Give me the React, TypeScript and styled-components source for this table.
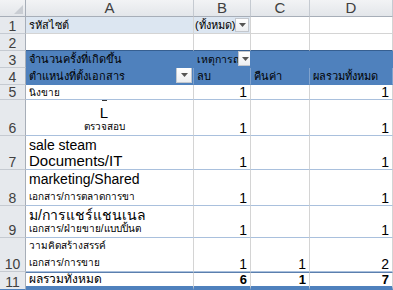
import React from 'react';
import styled, { createGlobalStyle } from 'styled-components';

const GlobalStyle = createGlobalStyle`
  html, body {
    margin: 0;
    padding: 0;
    background: #ffffff;
  }
  body {
    font-family: "Liberation Sans", Arial, "Noto Sans", sans-serif;
  }
`;

const ROW_HEIGHTS = [17, 17, 17, 17, 17, 15, 36, 34, 36, 32, 34, 18];

const GRID = '#d4d4d4';
const BAND = '#a9c0dd';
const BLUE = '#4f81bd';

const Sheet = styled.div`
  display: grid;
  grid-template-columns: 26px 168px 57px 59px 83px;
  grid-template-rows: ${ROW_HEIGHTS.map((h) => `${h}px`).join(' ')};
  width: 393px;
  height: 290px;
  overflow: hidden;
`;

const HeadBase = styled.div`
  box-sizing: border-box;
  display: flex;
  justify-content: center;
  font-size: 15px;
  color: #404040;
  background: linear-gradient(#f2f3f5, #e3e6ea);
  overflow: hidden;
`;

const Corner = styled(HeadBase)`
  position: relative;
  border-right: 1px solid #a7aeb8;
  border-bottom: 1px solid #a7aeb8;

  svg {
    position: absolute;
    right: 2px;
    bottom: 2px;
  }
`;

const ColHead = styled(HeadBase)`
  align-items: center;
  border-right: 1px solid #c5cad1;
  border-bottom: 1px solid #a7aeb8;
  line-height: 16px;
`;

const RowHead = styled(HeadBase)<{ $last?: boolean }>`
  align-items: flex-end;
  background: #e6e9ed;
  border-right: 1px solid #a7aeb8;
  border-bottom: 1px solid ${({ $last }) => ($last ? BLUE : '#c5cad1')};
  font-size: 14px;
  line-height: 14px;
`;

const Cell = styled.div<{ $line?: string; $bg?: string; $right?: boolean }>`
  box-sizing: border-box;
  display: flex;
  align-items: flex-end;
  justify-content: ${({ $right }) => ($right ? 'flex-end' : 'flex-start')};
  padding: 0 2px 1px 3px;
  background: ${({ $bg }) => $bg || '#ffffff'};
  border-right: 1px solid ${GRID};
  border-bottom: 1px solid ${({ $line }) => $line || GRID};
  font-size: 11px;
  line-height: 14px;
  color: #000000;
  white-space: nowrap;
  overflow: hidden;
`;

const Clip = styled.span`
  min-width: 0;
  overflow: hidden;
`;

const FilterCell = styled(Cell)`
  background: #dce6f1;
  padding: 0 1px 1px 1px;
`;

const PivotHead = styled(Cell)<{ $top?: boolean }>`
  background: ${BLUE};
  border-right: 1px solid ${({ $top }) => ($top ? BLUE : '#7fa2cd')};
  border-bottom: 1px solid ${BLUE};
  justify-content: space-between;
  padding-right: 1px;
`;

const EventLabel = styled.span`
  flex: none;
  font-size: 10.5px;
`;

const LabelCell = styled(Cell)`
  flex-direction: column;
  align-items: flex-start;
  justify-content: space-between;
  padding: 2px 2px 2px 3px;
  border-bottom-color: ${BAND};
`;

const ValueCell = styled(Cell)`
  justify-content: flex-end;
  font-size: 14px;
  line-height: 14px;
  padding: 0 3px 0 0;
  border-bottom-color: ${BAND};
`;

const TotalCell = styled(Cell)`
  font-weight: bold;
  font-size: 13px;
  line-height: 13px;
  border-bottom: 4px solid ${BLUE};
  border-top: 1px solid #5b7fae;
  padding: 0 3px 0 3px;
`;

const TotalLabel = styled(TotalCell)`
  font-weight: normal;
  font-size: 12px;
`;

const Big = styled.span`
  font-size: 15px;
  line-height: 16px;
`;

const Mid = styled.span`
  font-size: 14px;
  line-height: 15px;
`;

const Small = styled.span`
  font-size: 10px;
  line-height: 12px;
`;

const OddLabel = styled.div`
  display: flex;
  flex-direction: column;
  align-items: center;
  width: 150px;
  margin-top: -2px;
`;

const Tick = styled.span`
  width: 5px;
  height: 1px;
  background: #333333;
  margin-bottom: 4px;
`;

const DropButton = styled.span<{ $size?: number; $overlap?: number }>`
  box-sizing: border-box;
  display: inline-flex;
  align-items: center;
  justify-content: center;
  flex: none;
  position: relative;
  z-index: 1;
  margin-left: ${({ $overlap }) => -($overlap || 0)}px;
  width: ${({ $size }) => $size || 15}px;
  height: ${({ $size }) => $size || 15}px;
  background: linear-gradient(#ffffff, #eceef1);
  border: 1px solid #c3c7cd;
`;

const Caret = () => (
  <svg width="7" height="4" viewBox="0 0 7 4">
    <path d="M0 0 H7 L3.5 4 Z" fill="#555" />
  </svg>
);

const Drop = ({ size, overlap }: { size?: number; overlap?: number }) => (
  <DropButton $size={size} $overlap={overlap}>
    <Caret />
  </DropButton>
);

interface IRow {
  n: number;
  label: React.ReactNode;
  b?: number;
  c?: number;
  d?: number;
}

const rows: IRow[] = [
  { n: 5, label: <Small>นิงขาย</Small>, b: 1, d: 1 },
  {
    n: 6,
    label: (
      <OddLabel>
        <Tick />
        <Big>L</Big>
        <Small>ตรวจสอบ</Small>
      </OddLabel>
    ),
    b: 1,
    d: 1,
  },
  {
    n: 7,
    label: (
      <>
        <Mid>sale steam</Mid>
        <Big>Documents/IT</Big>
      </>
    ),
    b: 1,
    d: 1,
  },
  {
    n: 8,
    label: (
      <>
        <Mid>marketing/Shared</Mid>
        <Small>เอกสาร/การตลาดการขา</Small>
      </>
    ),
    b: 1,
    d: 1,
  },
  {
    n: 9,
    label: (
      <>
        <Mid>ม/การแชร์แชนเนล</Mid>
        <Small>เอกสาร/ฝ่ายขาย/แบบปิ้นต</Small>
      </>
    ),
    b: 1,
    d: 1,
  },
  {
    n: 10,
    label: (
      <>
        <Small>วามคิดสร้างสรรค์</Small>
        <Small>เอกสาร/การขาย</Small>
      </>
    ),
    b: 1,
    c: 1,
    d: 2,
  },
];

const App: React.FC = () => (
  <>
    <GlobalStyle />
    <Sheet>
      <Corner>
        <svg width="9" height="9" viewBox="0 0 9 9">
          <path d="M9 0 V9 H0 Z" fill="#c9cdd3" />
        </svg>
      </Corner>
      <ColHead>A</ColHead>
      <ColHead>B</ColHead>
      <ColHead>C</ColHead>
      <ColHead>D</ColHead>

      <RowHead>1</RowHead>
      <Cell $bg="#dce6f1">รหัสไซต์</Cell>
      <FilterCell>
        <Clip>(ทั้งหมด)</Clip>
        <Drop size={14} />
      </FilterCell>
      <Cell />
      <Cell />

      <RowHead>2</RowHead>
      <Cell $line="#365f91" />
      <Cell $line="#365f91" />
      <Cell $line="#365f91" />
      <Cell $line="#365f91" />

      <RowHead>3</RowHead>
      <PivotHead $top>จำนวนครั้งที่เกิดขึ้น</PivotHead>
      <PivotHead $top>
        <EventLabel>เหตุการณ์</EventLabel>
        <Drop size={15} overlap={5} />
      </PivotHead>
      <PivotHead $top />
      <PivotHead $top />

      <RowHead>4</RowHead>
      <PivotHead>
        <Clip>ตำแหน่งที่ตั้งเอกสาร</Clip>
        <Drop size={16} />
      </PivotHead>
      <PivotHead>ลบ</PivotHead>
      <PivotHead>คืนค่า</PivotHead>
      <PivotHead>ผลรวมทั้งหมด</PivotHead>

      {rows.map(({ n, label, b, c, d }) => (
        <React.Fragment key={n}>
          <RowHead>{n}</RowHead>
          <LabelCell>{label}</LabelCell>
          <ValueCell>{b}</ValueCell>
          <ValueCell>{c}</ValueCell>
          <ValueCell>{d}</ValueCell>
        </React.Fragment>
      ))}

      <RowHead $last>11</RowHead>
      <TotalLabel>ผลรวมทั้งหมด</TotalLabel>
      <TotalCell $right>6</TotalCell>
      <TotalCell $right>1</TotalCell>
      <TotalCell $right>7</TotalCell>
    </Sheet>
  </>
);

export default App;
